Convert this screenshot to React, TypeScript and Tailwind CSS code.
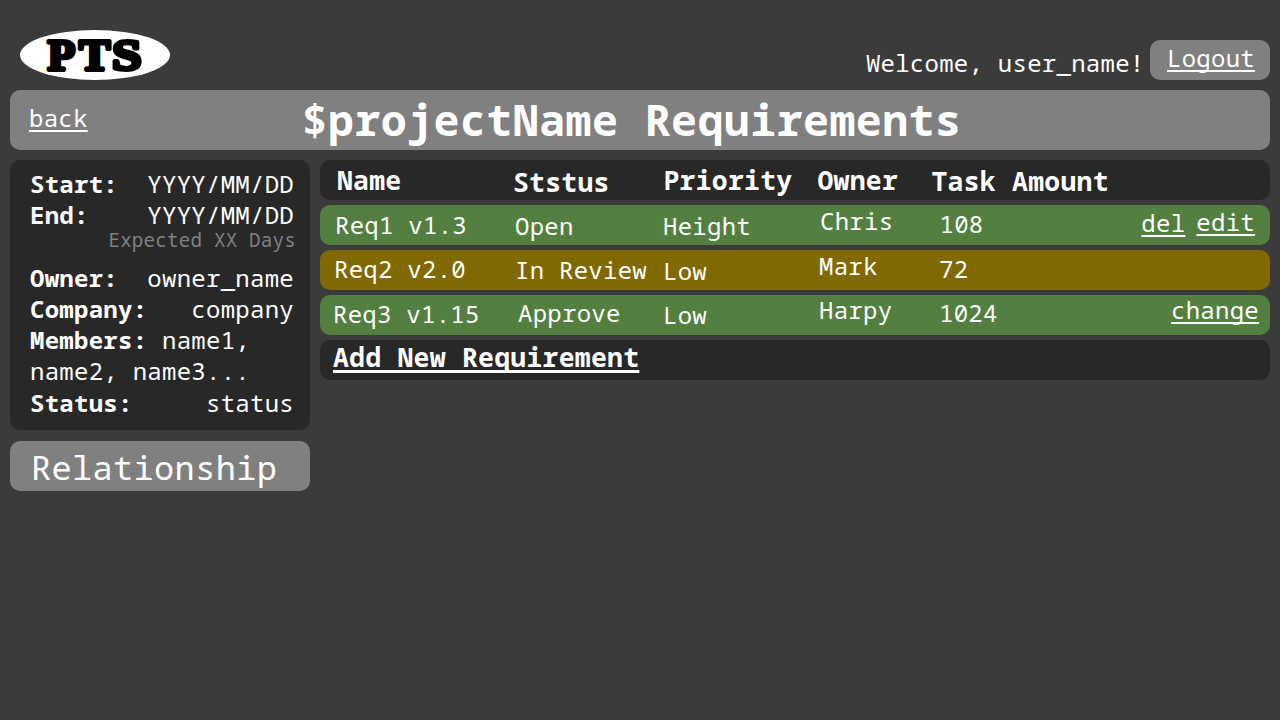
import type { ReactNode } from "react";

type Cell = { text: string; className: string };
type Action = { label: string; className: string };
type Requirement = { tone: string; cells: Cell[]; actions: Action[] };

const columns = "grid grid-cols-[180px_150px_155px_115px_1fr_auto] items-start";

const headings: Cell[] = [
  { text: "Name", className: "pl-[17px] mt-px" },
  { text: "Ststus", className: "pl-[13px] mt-[3px]" },
  { text: "Priority", className: "pl-[13.5px] mt-px" },
  { text: "Owner", className: "pl-[12.5px] mt-px" },
  { text: "Task Amount", className: "pl-[11.5px] mt-[2px]" },
];

const requirements: Requirement[] = [
  {
    tone: "bg-[#538040]",
    cells: [
      { text: "Req1 v1.3", className: "pl-[15px] mt-px" },
      { text: "Open", className: "pl-[15px] mt-[2px]" },
      { text: "Height", className: "pl-[13px] mt-[2px]" },
      { text: "Chris", className: "pl-[15px] -mt-[3px]" },
      { text: "108", className: "pl-[19.5px]" },
    ],
    actions: [
      { label: "del", className: "-mt-px mr-[11px]" },
      { label: "edit", className: "-mt-[2px] mr-[15px]" },
    ],
  },
  {
    tone: "bg-[#806900]",
    cells: [
      { text: "Req2 v2.0", className: "pl-[14px]" },
      { text: "In Review", className: "pl-[15px] mt-px" },
      { text: "Low", className: "pl-[13px] mt-[2px]" },
      { text: "Mark", className: "pl-[14px] -mt-[3px]" },
      { text: "72", className: "pl-[19px]" },
    ],
    actions: [],
  },
  {
    tone: "bg-[#538040]",
    cells: [
      { text: "Req3 v1.15", className: "pl-[13px]" },
      { text: "Approve", className: "pl-[18px] -mt-px" },
      { text: "Low", className: "pl-[13px] mt-px" },
      { text: "Harpy", className: "pl-[14px] -mt-[4px]" },
      { text: "1024", className: "pl-[19px] -mt-px" },
    ],
    actions: [{ label: "change", className: "-mt-[4px] mr-[11px]" }],
  },
];

function TextLink({ children, className = "decoration-2" }: { children: ReactNode; className?: string }) {
  return (
    <a
      href="#"
      className={`block underline underline-offset-[3px] [text-decoration-skip-ink:none] ${
        className.includes("decoration-") ? "" : "decoration-2"
      } ${className}`}
    >
      {children}
    </a>
  );
}

function Field({ label, value, className = "" }: { label: string; value: string; className?: string }) {
  return (
    <div className={`flex justify-between leading-[31px] ${className}`}>
      <b>{label}</b>
      <span>{value}</span>
    </div>
  );
}

function Logo() {
  return (
    <svg width="150" height="50" viewBox="0 0 150 50" className="block">
      <ellipse cx="75" cy="25" rx="75" ry="25" fill="#fff" />
      <g
        fontFamily="'Liberation Serif', serif"
        fontWeight="bold"
        fontSize="44"
        stroke="#000"
        strokeWidth="3.8"
        strokeLinejoin="round"
      >
        <text x="27.5" y="39.8" textLength="28" lengthAdjust="spacingAndGlyphs">P</text>
        <text x="59" y="39.8" textLength="31.5" lengthAdjust="spacingAndGlyphs">T</text>
        <text x="92" y="39.8" textLength="30" lengthAdjust="spacingAndGlyphs">S</text>
      </g>
    </svg>
  );
}

export default function App() {
  return (
    <div className="h-[720px] w-[1280px] overflow-hidden whitespace-pre bg-[#3b3b3b] px-[10px] font-['Noto_Sans_Mono','DejaVu_Sans_Mono',monospace] text-[24px] tracking-[0.011em] text-white">
      <header className="flex h-[90px] items-start justify-between pl-[10px] pt-[30px]">
        <Logo />
        <div className="flex pt-[10px]">
          <span className="mt-[3px] mr-[5.5px] leading-[40px]">Welcome, user_name!</span>
          <div className="h-[40px] w-[120px] rounded-[10px] bg-[#808080] pl-[17px]">
            <TextLink className="-mt-[2px] w-fit leading-[40px]">Logout</TextLink>
          </div>
        </div>
      </header>

      <div className="flex h-[60px] rounded-[10px] bg-[#808080] pl-[19px]">
        <TextLink className="-mt-[2px] leading-[60px]">back</TextLink>
        <h1 className="ml-[214px] text-[43.2px] font-bold leading-[60px] tracking-[0.011em]">$projectName Requirements</h1>
      </div>

      <main className="mt-[10px] flex gap-[10px]">
        <aside className="w-[300px]">
          <section className="h-[270px] rounded-[10px] bg-[#282828] pl-[20px] pr-[16px] pt-[8px]">
            <Field label="Start:" value="YYYY/MM/DD" />
            <Field label="End:" value="YYYY/MM/DD" />
            <div className="-mt-px -mr-[2px] h-[33px] text-right text-[19.2px] leading-[22px] tracking-[0.011em] text-[#808080]">Expected XX Days</div>
            <Field label="Owner:" value="owner_name" />
            <Field label="Company:" value="company" />
            <div className="leading-[31px]">
              <b>Members:</b> name1,
              <br />
              name2, name3...
            </div>
            <Field label="Status:" value="status" className="mt-px" />
          </section>
          <button className="mt-[11px] block h-[50px] w-full rounded-[10px] bg-[#808080] pl-[21px] text-left text-[33.6px] leading-[52px] tracking-[0.011em]">
            <span className="block h-[50px]">Relationship</span>
          </button>
        </aside>

        <section className="flex w-[950px] flex-col gap-[5px]">
          <div className={`${columns} h-[40px] rounded-[10px] bg-[#282828] text-[26.4px] font-bold leading-[38px] tracking-[0.011em]`}>
            {headings.map((h) => (
              <div key={h.text} className={h.className}>{h.text}</div>
            ))}
          </div>
          {requirements.map((r) => (
            <div key={r.cells[0].text} className={`${columns} h-[40px] rounded-[10px] leading-[38px] ${r.tone}`}>
              {r.cells.map((c) => (
                <div key={c.text} className={c.className}>{c.text}</div>
              ))}
              <div className="flex">
                {r.actions.map((a) => (
                  <TextLink key={a.label} className={a.className}>{a.label}</TextLink>
                ))}
              </div>
            </div>
          ))}
          <div className="h-[40px] rounded-[10px] bg-[#282828] pl-[13px]">
            <TextLink className="-mt-[2px] w-fit text-[26.4px] font-bold leading-[38px] tracking-[0.011em] decoration-[3px]">Add New Requirement</TextLink>
          </div>
        </section>
      </main>
    </div>
  );
}
